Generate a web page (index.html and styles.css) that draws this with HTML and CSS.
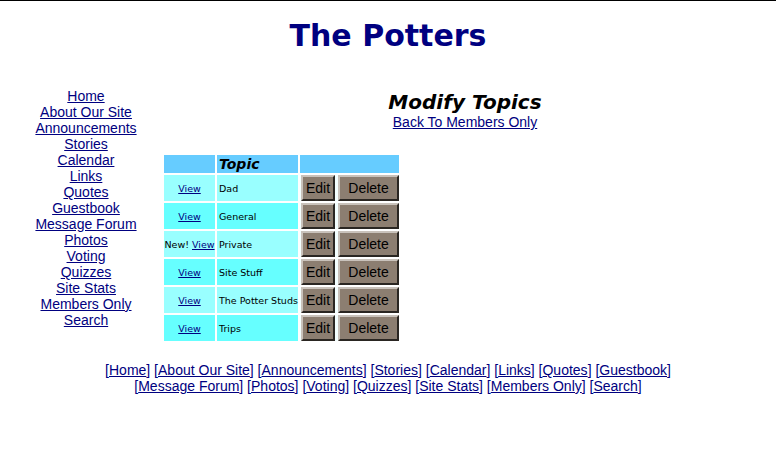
FILE: index.html
```html
<!DOCTYPE html>
<html>
<head>
<meta charset="utf-8">
<title>The Potters</title>
<link rel="stylesheet" href="styles.css">
</head>
<body>
<div class="page">
  <h1 class="site-title">The Potters</h1>
  <div class="layout">
    <nav class="nav">
      <a href="#">Home</a>
      <a href="#">About Our Site</a>
      <a href="#">Announcements</a>
      <a href="#">Stories</a>
      <a href="#">Calendar</a>
      <a href="#">Links</a>
      <a href="#">Quotes</a>
      <a href="#">Guestbook</a>
      <a href="#">Message Forum</a>
      <a href="#">Photos</a>
      <a href="#">Voting</a>
      <a href="#">Quizzes</a>
      <a href="#">Site Stats</a>
      <a href="#">Members Only</a>
      <a href="#">Search</a>
    </nav>
    <main class="main">
      <h2 class="page-title">Modify Topics</h2>
      <a class="back" href="#">Back To Members Only</a>
      <table class="topics">
        <tr class="head">
          <th class="c1"></th>
          <th class="c2">Topic</th>
          <th class="c3"></th>
        </tr>
        <tr class="light">
          <td class="c1"><a href="#">View</a></td>
          <td class="c2">Dad</td>
          <td class="c3"><div class="btns"><button class="btn edit">Edit</button><button class="btn del">Delete</button></div></td>
        </tr>
        <tr class="bright">
          <td class="c1"><a href="#">View</a></td>
          <td class="c2">General</td>
          <td class="c3"><div class="btns"><button class="btn edit">Edit</button><button class="btn del">Delete</button></div></td>
        </tr>
        <tr class="light">
          <td class="c1 new">New! <a href="#">View</a></td>
          <td class="c2">Private</td>
          <td class="c3"><div class="btns"><button class="btn edit">Edit</button><button class="btn del">Delete</button></div></td>
        </tr>
        <tr class="bright">
          <td class="c1"><a href="#">View</a></td>
          <td class="c2">Site Stuff</td>
          <td class="c3"><div class="btns"><button class="btn edit">Edit</button><button class="btn del">Delete</button></div></td>
        </tr>
        <tr class="light">
          <td class="c1"><a href="#">View</a></td>
          <td class="c2">The Potter Studs</td>
          <td class="c3"><div class="btns"><button class="btn edit">Edit</button><button class="btn del">Delete</button></div></td>
        </tr>
        <tr class="bright">
          <td class="c1"><a href="#">View</a></td>
          <td class="c2">Trips</td>
          <td class="c3"><div class="btns"><button class="btn edit">Edit</button><button class="btn del">Delete</button></div></td>
        </tr>
      </table>
    </main>
  </div>
  <footer class="footer">
    [<a href="#">Home</a>] [<a href="#">About Our Site</a>] [<a href="#">Announcements</a>] [<a href="#">Stories</a>] [<a href="#">Calendar</a>] [<a href="#">Links</a>] [<a href="#">Quotes</a>] [<a href="#">Guestbook</a>]<br>
    [<a href="#">Message Forum</a>] [<a href="#">Photos</a>] [<a href="#">Voting</a>] [<a href="#">Quizzes</a>] [<a href="#">Site Stats</a>] [<a href="#">Members Only</a>] [<a href="#">Search</a>]
  </footer>
</div>
</body>
</html>
```

FILE: styles.css
```css
html {
  background: #ffffff;
}
body {
  margin: 0;
  border-top: 1px solid #000000;
  background: #ffffff;
  font-family: "Liberation Sans", Arial, sans-serif;
  font-size: 14px;
  color: #000000;
}
a {
  color: #000080;
}
.page {
  padding: 8px;
}
.site-title {
  margin: 9px 0 0 0;
  font-family: "DejaVu Sans", Verdana, sans-serif;
  font-weight: bold;
  font-size: 30px;
  line-height: 36px;
  color: #000080;
  text-align: center;
}
.layout {
  display: flex;
  margin-top: 34px;
}
.nav {
  width: 152px;
  padding-left: 2px;
  display: flex;
  flex-direction: column;
  align-items: center;
  line-height: 16px;
}
.main {
  flex: 1;
  display: flex;
  flex-direction: column;
  align-items: center;
  padding-top: 2px;
}
.page-title {
  margin: 0;
  font-family: "DejaVu Sans", Verdana, sans-serif;
  font-weight: bold;
  font-style: italic;
  font-size: 20px;
  line-height: 24px;
}
.back {
  line-height: 16px;
}
.topics {
  align-self: flex-start;
  margin-top: 23px;
  border-collapse: separate;
  border-spacing: 2px;
  font-family: "DejaVu Sans", Verdana, sans-serif;
  font-size: 9.5px;
}
.topics th,
.topics td {
  padding: 0;
}
.topics .c1 {
  width: 51px;
  text-align: center;
  white-space: nowrap;
}
.topics .c2 {
  width: 79px;
  text-align: left;
  padding-left: 2px;
  white-space: nowrap;
}
.topics .c3 {
  width: 99px;
}
.head th {
  height: 18px;
  background: #66ccff;
  font-weight: bold;
  font-style: italic;
  font-size: 14px;
  text-align: left;
}
.topics td {
  height: 26px;
}
.light .c1,
.light .c2 {
  background: #99ffff;
}
.bright .c1,
.bright .c2 {
  background: #66ffff;
}
.topics td.c3 {
  background: #f4ffff;
}
.btns {
  display: flex;
  height: 26px;
  padding-left: 1px;
}
.btn {
  box-sizing: border-box;
  height: 26px;
  padding: 0;
  margin: 0;
  font-family: "Liberation Sans", Arial, sans-serif;
  font-size: 14px;
  color: #000000;
  background: #8c7e71;
  border-style: solid;
  border-width: 2px;
  border-color: #c9c2bb #2a2622 #2a2622 #c9c2bb;
}
.edit {
  width: 34px;
  margin-right: 3px;
}
.del {
  width: 61px;
}
.footer {
  margin-top: 19px;
  text-align: center;
  line-height: 16px;
  color: #000080;
}
```
